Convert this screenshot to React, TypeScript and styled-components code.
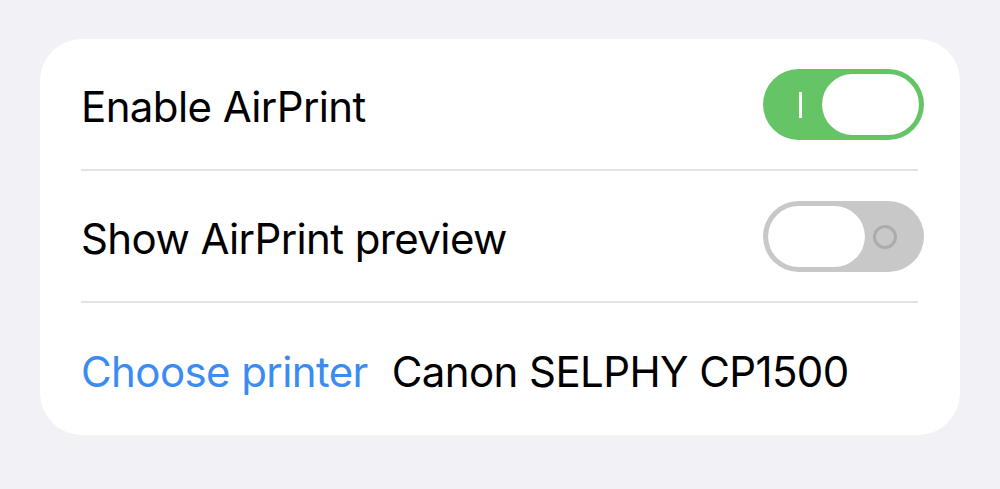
import React from "react";
import styled, { createGlobalStyle } from "styled-components";

const GlobalStyle = createGlobalStyle`
  html, body {
    margin: 0;
    padding: 0;
    background: #f2f1f6;
  }
  body {
    font-family: Inter, "Liberation Sans", Arial, sans-serif;
    -webkit-font-smoothing: antialiased;
  }
`;

const Page = styled.div`
  width: 1000px;
  height: 489px;
  box-sizing: border-box;
  padding: 39px 40px 0 40px;
`;

const Card = styled.div`
  background: #ffffff;
  border-radius: 42px;
  height: 396px;
  display: flex;
  flex-direction: column;
`;

const Row = styled.div<{ $h: number }>`
  height: ${(p) => p.$h}px;
  display: flex;
  align-items: center;
  justify-content: space-between;
  padding: 0 36px 0 41px;
`;

const Divider = styled.div`
  height: 2px;
  background: #e4e4e8;
  margin: 0 42px 0 41px;
`;

const Label = styled.span<{ $color?: string }>`
  font-size: 42px;
  line-height: 48px;
  padding-top: 5px;
  letter-spacing: -0.6px;
  color: ${(p) => p.$color ?? "#000000"};
  white-space: nowrap;
`;

const Group = styled.div`
  display: flex;
  align-items: center;
  gap: 24px;
`;

const Track = styled.div<{ $on: boolean }>`
  position: relative;
  width: 161px;
  height: 71px;
  border-radius: 36px;
  background: ${(p) => (p.$on ? "#65c466" : "#c8c8c8")};
  display: flex;
  align-items: center;
  justify-content: ${(p) => (p.$on ? "flex-end" : "flex-start")};
  padding: 0 5px;
  box-sizing: border-box;
`;

const Knob = styled.div`
  width: 97px;
  height: 61px;
  border-radius: 31px;
  background: #ffffff;
  box-shadow: 0 0 1px rgba(0, 0, 0, 0.08);
`;

const OnMark = styled.div`
  position: absolute;
  left: 36px;
  top: 23px;
  width: 3px;
  height: 26px;
  background: #ffffff;
`;

const OffMark = styled.div`
  position: absolute;
  right: 27px;
  top: 24px;
  width: 18px;
  height: 18px;
  border-radius: 50%;
  border: 3px solid #acacac;
`;

function Toggle({ on }: { on: boolean }) {
  return (
    <Track $on={on}>
      {on ? <OnMark /> : <OffMark />}
      <Knob />
    </Track>
  );
}

export default function App() {
  return (
    <>
      <GlobalStyle />
      <Page>
        <Card>
          <Row $h={130}>
            <Label>Enable AirPrint</Label>
            <Toggle on />
          </Row>
          <Divider />
          <Row $h={130}>
            <Label>Show AirPrint preview</Label>
            <Toggle on={false} />
          </Row>
          <Divider />
          <Row $h={132}>
            <Group>
              <Label $color="#3b8cf2">Choose printer</Label>
              <Label>Canon SELPHY CP1500</Label>
            </Group>
          </Row>
        </Card>
      </Page>
    </>
  );
}
